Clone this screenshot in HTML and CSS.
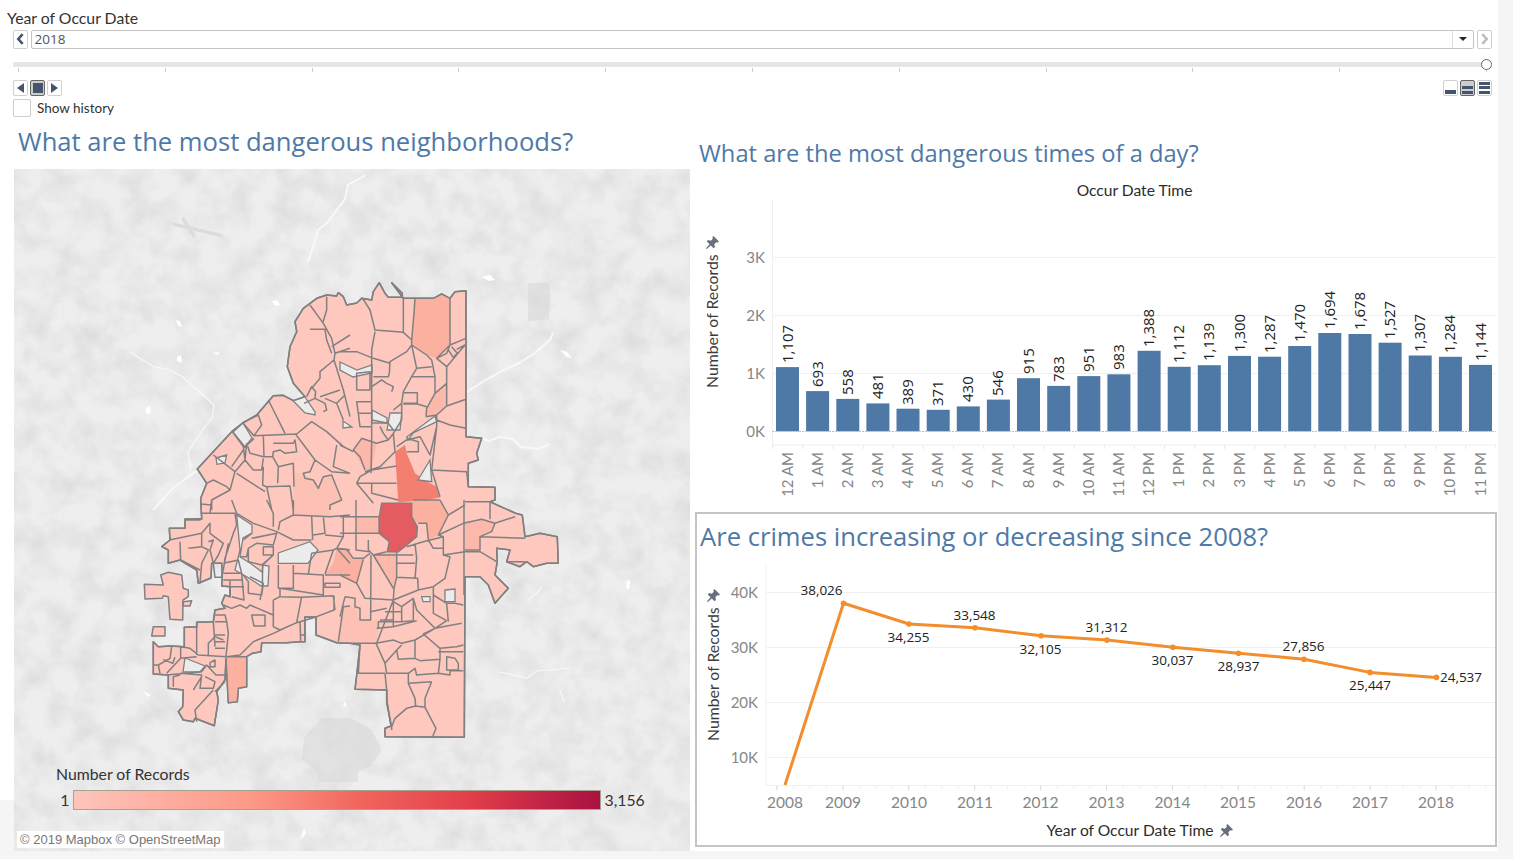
FILE: index.html
```html
<!DOCTYPE html>
<html lang="en">
<head>
	<meta charset="UTF-8">
	<title>Atlanta crime dashboard</title>
	<link rel="stylesheet" href="styles.css">
</head>
<body>
<div class="dash">
	<div class="filter">
		<div class="filter-label">Year of Occur Date</div>
		<div class="picker">
			<span class="btn"><svg viewBox="0 0 15 18" class="chev"><path d="M10 3.500 5 9l5 5.500" class="chev-on"/></svg></span>
			<div class="select">
				<span class="select-value">2018</span>
				<span class="select-arrow"><i class="caret"></i></span>
			</div>
			<span class="btn"><svg viewBox="0 0 15 18" class="chev"><path d="M5 3.500 10 9l-5 5.500" class="chev-off"/></svg></span>
		</div>
		<div class="slider">
			<div class="track"></div>
			<span class="knob"></span>
			<div class="ticks"><i></i><i></i><i></i><i></i><i></i><i></i><i></i><i></i><i></i><i></i><i></i></div>
		</div>
		<div class="controls">
			<div class="btn-group">
				<span class="btn small"><i class="tri-left"></i></span>
				<span class="btn small active"><i class="stop"></i></span>
				<span class="btn small"><i class="tri-right"></i></span>
			</div>
			<div class="btn-group">
				<span class="btn small view"><i></i></span>
				<span class="btn small view active"><i class="dim"></i><i></i><i></i></span>
				<span class="btn small view"><i></i><i></i><i></i></span>
			</div>
		</div>
		<label class="history"><span class="check"></span>Show history</label>
	</div>

	<div class="panels">
		<section class="left">
			<h2 class="title big">What are the most dangerous neighborhoods?</h2>
			<div class="map">
				<svg class="map-svg" width="676" height="682" viewBox="14 169 676 682">
					<defs>
						<filter id="mottle" x="0" y="0" width="100%" height="100%" color-interpolation-filters="sRGB">
							<feTurbulence type="fractalNoise" baseFrequency=".04" numOctaves="4" seed="7"/>
							<feColorMatrix values="0 0 0 0 .5  0 0 0 0 .5  0 0 0 0 .5  .28 0 0 0 -.1"/>
						</filter>
						<path id="outline" d="M197.300 469L231.700 431.700 243.300 422.700 256.700 415 273.300 395.700 283.300 395.300 293.300 400.700 305 396.700 293.300 383.300 287.300 366.700 290 346.700 296.700 331.700 295 321.700 303.300 308.300 316.700 298.300 326.700 295 336.700 296 338.300 292.700 343.300 296.700 346.700 305 356.700 303 361.700 298.300 371.700 300 373.300 291.700 379.300 282.700 385 293.300 388.300 297.300 402.300 297.300 402.300 293.300 391.700 282.700 403.300 298.300 433.300 298.300 441.700 294 450 298.300 455 291.700 466 290.700 466 436.700 481.700 438.300 476.700 453.300 478.300 460 468.300 463.300 468.300 486.700 495 487.300 495 500 490 501.700 515.700 513.300 522.300 515 525 536.700 540 533.300 557.300 536.700 558.300 563.300 546.700 563.300 533.300 566.700 526.700 561.700 520 566.700 506.700 561.700 510 550 496.700 548.300 497.300 561.700 495 575 508.300 588.300 495 603.300 488.300 585 480 576.700 465 576.700 464.300 737.300 385 736.700 385 728.300 391 726 386.700 700 386.700 690 355 689.300 356.700 675 360 645 350 643.300 336.700 642.700 316 635 316 617 305 617 305 641.700 300 641.700 286.700 642.700 261.700 642.700 261 651.700 252.300 653.300 246.700 656.700 246.700 686.700 238.300 688.300 237.300 701.700 228.300 702.700 226 658.300 225 680 216.700 691.700 218.300 700 214.300 725.700 195 718.300 193.300 721.700 183.300 720 178.300 711.700 182.700 706.700 183.300 690 168.300 688.300 168.300 675 153.300 674 153.300 641.700 158.300 646.700 170 646 184.300 646.700 184.300 627.300 196.700 626.700 196.700 622.300 213.300 621.700 215 610 225 608.300 221.700 603.300 225 595 230 596.700 230 586.700 221.700 586 222.300 578.300 221.700 563.300 211.700 563.300 211 578 198.300 583.300 196.700 570 180 560 168.300 563.300 168.300 550 161.700 546.700 170 540 169.300 528.300 185 528.300 185 519 201.700 519 200.700 500 200.700 498.300 206.700 483.300Z"/>
					</defs>
					<rect x="14" y="169" width="676" height="682" class="land"/>
					<rect x="14" y="169" width="676" height="682" filter="url(#mottle)"/>

					<!-- base map -->
					<path class="blob" d="M528 283h21l1 14-1 22-21 2zM304 738l18-20h28l22 12 9 20-10 16-13 6v10h-40l-2-12-14-10z"/>
					<path class="blob-soft" d="M172 222l50 12 2 4-50-12zM184 217l12 19-3 2-12-19z"/>
					<path class="road" d="M153 510l20-22 22-16 10-5M308 262l6-18 4-14 9-7 18-24 3-14 18-10M467 392l17-11 18-10 17-8 16-10 15-13 3-7M469 441l12-3 8 3 10-4 14 2 8 8 17 2 12-5"/>
					<path class="river" d="M130 352l24 15 13 2 14 7 19 16 14 13-2 13-11 14-13 20 3 18M500 672l27 6 10-7 33-3M528 600l10-8 4-6M560 690l4 12"/>
					<path class="speck" d="M176 320l4 1 2 6-4-1zM177 357l4-2 1 8-5-2zM272 301l5-1 3 5-5 1zM212 353l8-1-2 3zM146 408l4-2 1 7-5 1zM482 277l8-2 5 5-6 1zM560 350l7 2 5 6-5-1zM627 580l3 1-1 8-3-1zM148 697l-5-6 8 4zM345 701l2 6-4-1zM300 840l4-12 2 6z"/>

					<!-- city outline -->
					<use href="#outline" class="hood"/>
					<path class="hood" d="M144.300 584.300L163.300 585 160.700 575 168.300 572.300 181.700 575 183.300 588.300 188.300 590 188.300 596.700 183 600 182.700 620 170 619.300 168.300 596.700 163.300 595.700 162.300 598.300 145 599Z"/>
					<path class="hood" d="M183.300 601.700l8.400-1-1.700 5.300h-6.700zM153.300 626.700H165V636h-13.300z"/>

					<!-- slightly darker areas, zoom traced -->
					<g transform="translate(340 270) scale(.33333)">
						<path class="t3" d="M225 85h55l25-13 25 13v140l-40 40-30-10-45-30v-15l7-80z"/>
						<path class="t2" d="M320 340v68l-30 27-32 5 2-25 25-45zM65 505l45 15-15 80H75L40 545z"/>
						<path class="t4" d="M165 545l30-20 5 25 25 60 45 30 20 10 8 33-58 9-65 5z"/>
					</g>
					<g transform="translate(340 500) scale(.33333)">
						<path class="t3" d="M220 0h80l25 45-30 60-30 15-5-50h-28l-17-20V10zM0 150h20l20 25h30l-20 75-50-25z"/>
						<path class="t2" d="M375 70l50-12 40 12-10 25-35 15v45h-45zM50 50h68v50H50zM100 165l70-10v77l-8 33z"/>
						<path class="t1" d="M0 430v-75l15-35h30l15 40h55v25l-7 45z"/>
						<path class="t5" d="M125 10h90v40l17 30-2 30-30 25-25 20h-33l6-30-30-25V50z"/>
					</g>
					<g transform="translate(130 500) scale(.33333)">
						<path class="t3" d="M290 470h60v90l-25 5-3 40-27 3zM620 145l40 5v75l-75-3 25-32z"/>
						<path class="t1" d="M490 0h110v50l-110-5z"/>
					</g>
					<g transform="translate(130 270) scale(.33333)">
						<path class="t1" d="M495 610h25l5 15 25 5 15 25 15-35 25-5 30 75-35 15v15H490z"/>
					</g>
					<use href="#outline" class="outline-top"/>

					<!-- holes -->
					<g class="holes">
						<path d="M233 432l10-9 9 15-7 9zM216 458l10.700-3-1.700 8-8 1.300zM293.300 401l11.700-4 10 15v3l-10-2zM340 362l17 8 15-5v8l-19 4-13-7zM343 421l9 6-9 1zM372 410l15 8v5h-15zM390 413h11.700l-1.700 17h-13zM406.700 437L435 416l1.700 5.700L413 433l-5 7zM418 480l12-20 1.700 21.700zM445 590l10-1v12.700h-10zM421.700 596.700h8.300v5h-7zM278.300 553L310 541.700l8 8.300-10 13.300h-29.700zM236.700 515l15.300 10v8l-9 5-3 19 10 6 12 9 1-7 6 1-1 20h-7l-12-8-9-5-5-3 5-20zM185 658l20 8-5 6h-17z"/>
					</g>

					<!-- boundaries -->
					<g transform="translate(130 270) scale(.33333)">
						<path class="edge" d="M540 105l40 55 25 45 10 45-3 20 28 90 20 80M590 80v40l-12 40M540 178h45l5 32 15 40M605 230l55-35M615 250l45-15M612 270l-42 35v20l-25 30M530 380l15-30 12 15-2 20-33 15M570 380l60-20M555 385l30 15 5 20-10 5M585 385l35 15 25-25M620 400l20 50M415 390l50 100M338 458l47-23 10 30-23 32zM372 497l128-5 45-37 45 30 50 45M400 497l2 63h26M495 490l15 20 45 60 50 35 55 5M340 535l32-30M350 520l10 30 40 10M350 520l-5 50 25 30h25l5-35M430 520h60l5-10 5 35-35 5-15-10-20 5-2 15 17 30-2 50M307 485l33 45 5 40-30 35-65-50M305 590l35-50M315 605l-15 55M320 610l85 55M230 640l20-10 40 20 10 10-55 30v30M400 590l-2 55 10 5 72-2 10 72M445 590l45-10 2 70M555 570l-15 35-20 5 5 15 25 5 15 25 15-35 25-5 30 75-35 15v15M410 650l15 70M620 525l-10 65 50 20"/>
					</g>
					<g transform="translate(340 270) scale(.33333)">
						<path class="edge" d="M68 85l22 35 15 60 85 7V85M225 85l-3 45-7 80-25-23M330 85v140l-40 40M215 210v15l45 30 15 15 10 50v50l-25 45-2 25M215 225l15 70-15 25-25 45-5 35v50M215 225l-15 20-50 30-2 35-3 10h-45M150 280l-50-15-50-20H0M105 185l-10 55v280l-2 90M330 225l-10 25-30 15 30 25v118M330 225l48-20M350 238l25-13-55 65M325 240l15 22 12-12-17-20M230 295l45-5M215 320h68M190 368h42v32h-42M190 402h42l28 8M320 340l-35 30M320 408l58-20M258 440l32-5 30-27M290 450l40 15 48 10M290 435v35l-20 85-30-55-40 10M290 470l-15 130 105 5 5 45M275 600l25 80M200 505l35 10v30h-35M170 530l30-20M95 350l15-10 15-10 15 10 20 10-5 15M50 310l40-5v55H50zM95 395H50l5 35h40M55 430l5 40h35M95 450l50 10 15 20M185 400l-25 20M185 450l-25 40-15 20-35 10-45-15-25 35 20 20 15 40M120 470l10 20 15 20M160 490l5 55-45 45-45 15M0 525l40 20M60 620l35-20 75-12M60 620l-10 20 50 60M50 640h120M95 640v30l80 20"/>
					</g>
					<g transform="translate(130 500) scale(.33333)">
						<path class="edge" d="M212 40h103l5 35-10 25-25 75-5 35M245 0l-5 40M212 12l33 3M305 0l15 40 50 30 70 25 50 25h55M410 0l20 40v40M490 0v45l-40 20-5 25M490 45l110 5 60-5M545 50l3 70M580 50l5 50-35 5M585 105l55 5V50M640 110l-20 35 40 5M165 60h47M118 120l97-20 25-30v30l40 30-15 35-15 25 5 42h20l20-102M150 125l2 55 58 30M175 145l40-5 20 10-20 40-5 60M215 100v40M235 125l15-5-10 30 10 40M280 190l45-10 10 40h-55M280 240h55M300 240v50M335 220l7 80-37-10M300 260h42M340 225l15 20v35l40 5 5-35-40-20M365 115l75-15-10 35-50-5-25 15v40l40 10 35-30M400 140h30v25h-30zM340 120l25-20M330 170h20l5-25M430 165l-32 30-1 70-7 35M445 195v70h45v-70M490 220l90 5v60l-130-20v25l65 2 95-5 5 43M430 300l20-10M430 300v80l20 10 50-22 15-78M535 222l10-62 65-10-25 72M610 150l10-5 40 45M585 225h75M585 250h45v12h-45zM625 425l15-105 20-2M612 287v43l-52 20-60 18-70 32-60 25-40 40-40 5-85-5-25-20-28-5M200 370v95M250 365l5 75M255 365h35l5 35-7 70M255 345h30l5 20M255 405h30M255 425h30M235 465v-35l20-20 25 10M255 445h30M280 315l25 10 25-10 20 10 10-10 70 30M365 345h40v33h-33zM510 365l2 60M510 405h15M125 440l-5 35-35 20H70M152 440v35l-42 45M152 475l48-5M85 495l5 25M100 478l28 12 7-18M110 525l105-10 15-20 28 30h27M150 520l65 5-5 40h40l5-20-30-15M150 525l-20 5v30M215 530l-25 40M240 488l15-8v20h-15zM250 570l-55 60 5 35M255 575l30-30M290 470h60"/>
					</g>
					<g transform="translate(340 500) scale(.33333)">
						<path class="edge" d="M48 0v150l42 5M0 50h118M0 100h118M118 50v50M85 120v30l15 15M0 148h20l20 27h30l20-15M140 155l-40 10h70M100 165l60 100M70 178l-20 72M0 225l50 25 25 45 85 5 75-30 45-10 35-25 15-65-20-5v-55l-60 15-50 15M170 155v77l-8 33-2 35-50 130M235 270l-2-35-63-3M170 190h55M170 165h50M225 130l5 45-5 60M310 165l65-10h45l50 30M235 70h25l5 50M265 120l15 25h30M220 0h80l25 45-30 60 15 5M325 45l50-30M295 105l75-35 55-12 40 12 60-20M375 5h75v53M375 150h45v-40l35-15 10-25M420 110l135 5M500 185h55M15 290l30 5v25l15 5v35h32l1-195M15 290L0 350M92 335l48-10M160 305l25 15v45h-70v20l45-5zM120 360h40M135 335h50M185 320l35-25 10 35 55 55 80-15M220 295v67l-35 3M280 260v80l40 22M280 285l40 25h25l25 5M320 310l5 55M285 385l35-23M285 385l-35 17 50 43 50-5 20-5M110 385l50-5 70-18M285 385l-60 35-40 10-25-10-52 10M0 430h108l27 60 5 30h65M135 490l35-40 15-15M170 450l5 28 50-3 15 7 60-4-5 42-65 5-5-20-20 15v30l70-5M225 420v55M300 445v33M295 455h75M320 470l25 5 10 15v20h-35zM295 520l35 5v-13h40M135 520l5 50v40l15 70v10M205 550l20 45 2 23-27 7-35 30-10 25M275 545l-20 50v27l-28-4M255 622l33 63-10 25M60 435l-5 85h80"/>
						<path class="edge" d="M125 10h90v40l17 30-2 30-30 25-25 20h-33l6-30-30-25V50zM372 0v285"/>
					</g>
				</svg>
				<div class="legend">
					<div class="legend-title">Number of Records</div>
					<div class="legend-row">
						<span class="legend-min">1</span>
						<span class="legend-bar"></span>
						<span class="legend-max">3,156</span>
					</div>
				</div>
				<div class="attrib">© 2019 Mapbox © OpenStreetMap</div>
			</div>
		</section>

		<section class="right">
			<h2 class="title mid">What are the most dangerous times of a day?</h2>
			<svg class="chart" width="802" height="336" viewBox="695 176 802 336">
				<defs>
					<path id="pin" d="M7.500 0L13 5.500l-1.200 1.100-1.500-.4-2 2L9 11l-1.400 1.200-2.800-2.800L.8 13 0 12.200l3.600-4-2.800-2.800L2 4l2.800.7 2-2-.4-1.500z"/>
				</defs>
				<text x="1134.500" y="196" class="head">Occur Date Time</text>
				<line x1="772.500" y1="200" x2="772.500" y2="445" class="grid"/>
				<line x1="772" y1="257.500" x2="1496" y2="257.500" class="grid"/>
				<line x1="772" y1="315.500" x2="1496" y2="315.500" class="grid"/>
				<line x1="772" y1="373.500" x2="1496" y2="373.500" class="grid"/>
				<line x1="772" y1="445" x2="1496" y2="445" class="grid"/>
				<line x1="772.300" y1="447" x2="1496" y2="447" class="bar-ticks"/>

				<text x="765" y="263" class="axis end">3K</text>
				<text x="765" y="321" class="axis end">2K</text>
				<text x="765" y="379" class="axis end">1K</text>
				<text x="765" y="437" class="axis end">0K</text>
				<text transform="translate(718 388) rotate(-90)" class="axis-title">Number of Records</text>
				<use href="#pin" x="706" y="236" class="pin"/>

				<rect x="776" y="367.100" width="23" height="64.200" class="bar"/>
				<rect x="806.100" y="391.100" width="23" height="40.200" class="bar"/>
				<rect x="836.300" y="398.900" width="23" height="32.400" class="bar"/>
				<rect x="866.400" y="403.400" width="23" height="27.900" class="bar"/>
				<rect x="896.500" y="408.700" width="23" height="22.600" class="bar"/>
				<rect x="926.700" y="409.800" width="23" height="21.500" class="bar"/>
				<rect x="956.800" y="406.400" width="23" height="24.900" class="bar"/>
				<rect x="986.900" y="399.600" width="23" height="31.700" class="bar"/>
				<rect x="1017" y="378.200" width="23" height="53.100" class="bar"/>
				<rect x="1047.200" y="385.900" width="23" height="45.400" class="bar"/>
				<rect x="1077.300" y="376.100" width="23" height="55.200" class="bar"/>
				<rect x="1107.400" y="374.300" width="23" height="57" class="bar"/>
				<rect x="1137.600" y="350.800" width="23" height="80.500" class="bar"/>
				<rect x="1167.700" y="366.800" width="23" height="64.500" class="bar"/>
				<rect x="1197.800" y="365.200" width="23" height="66.100" class="bar"/>
				<rect x="1228" y="355.900" width="23" height="75.400" class="bar"/>
				<rect x="1258.100" y="356.700" width="23" height="74.600" class="bar"/>
				<rect x="1288.200" y="346" width="23" height="85.300" class="bar"/>
				<rect x="1318.300" y="333" width="23" height="98.300" class="bar"/>
				<rect x="1348.500" y="334" width="23" height="97.300" class="bar"/>
				<rect x="1378.600" y="342.700" width="23" height="88.600" class="bar"/>
				<rect x="1408.700" y="355.500" width="23" height="75.800" class="bar"/>
				<rect x="1438.900" y="356.800" width="23" height="74.500" class="bar"/>
				<rect x="1469" y="364.900" width="23" height="66.400" class="bar"/>
				<line x1="772" y1="431.500" x2="1496" y2="431.500" class="zero"/>

				<g transform="translate(-1.500 0)">
					<text transform="translate(794 363) rotate(-90)" class="val">1,107</text>
					<text transform="translate(824.100 387) rotate(-90)" class="val">693</text>
					<text transform="translate(854.300 395) rotate(-90)" class="val">558</text>
					<text transform="translate(884.400 399) rotate(-90)" class="val">481</text>
					<text transform="translate(914.500 405) rotate(-90)" class="val">389</text>
					<text transform="translate(944.700 406) rotate(-90)" class="val">371</text>
					<text transform="translate(974.800 402) rotate(-90)" class="val">430</text>
					<text transform="translate(1004.900 396) rotate(-90)" class="val">546</text>
					<text transform="translate(1035 374) rotate(-90)" class="val">915</text>
					<text transform="translate(1065.200 382) rotate(-90)" class="val">783</text>
					<text transform="translate(1095.300 372) rotate(-90)" class="val">951</text>
					<text transform="translate(1125.400 370) rotate(-90)" class="val">983</text>
					<text transform="translate(1155.600 347) rotate(-90)" class="val">1,388</text>
					<text transform="translate(1185.700 363) rotate(-90)" class="val">1,112</text>
					<text transform="translate(1215.800 361) rotate(-90)" class="val">1,139</text>
					<text transform="translate(1246 352) rotate(-90)" class="val">1,300</text>
					<text transform="translate(1276.100 353) rotate(-90)" class="val">1,287</text>
					<text transform="translate(1306.200 342) rotate(-90)" class="val">1,470</text>
					<text transform="translate(1336.300 329) rotate(-90)" class="val">1,694</text>
					<text transform="translate(1366.500 330) rotate(-90)" class="val">1,678</text>
					<text transform="translate(1396.600 339) rotate(-90)" class="val">1,527</text>
					<text transform="translate(1426.700 352) rotate(-90)" class="val">1,307</text>
					<text transform="translate(1456.900 353) rotate(-90)" class="val">1,284</text>
					<text transform="translate(1487 361) rotate(-90)" class="val">1,144</text>

					<text transform="translate(794 452) rotate(-90)" class="axis end">12 AM</text>
					<text transform="translate(824.100 452) rotate(-90)" class="axis end">1 AM</text>
					<text transform="translate(854.300 452) rotate(-90)" class="axis end">2 AM</text>
					<text transform="translate(884.400 452) rotate(-90)" class="axis end">3 AM</text>
					<text transform="translate(914.500 452) rotate(-90)" class="axis end">4 AM</text>
					<text transform="translate(944.700 452) rotate(-90)" class="axis end">5 AM</text>
					<text transform="translate(974.800 452) rotate(-90)" class="axis end">6 AM</text>
					<text transform="translate(1004.900 452) rotate(-90)" class="axis end">7 AM</text>
					<text transform="translate(1035 452) rotate(-90)" class="axis end">8 AM</text>
					<text transform="translate(1065.200 452) rotate(-90)" class="axis end">9 AM</text>
					<text transform="translate(1095.300 452) rotate(-90)" class="axis end">10 AM</text>
					<text transform="translate(1125.400 452) rotate(-90)" class="axis end">11 AM</text>
					<text transform="translate(1155.600 452) rotate(-90)" class="axis end">12 PM</text>
					<text transform="translate(1185.700 452) rotate(-90)" class="axis end">1 PM</text>
					<text transform="translate(1215.800 452) rotate(-90)" class="axis end">2 PM</text>
					<text transform="translate(1246 452) rotate(-90)" class="axis end">3 PM</text>
					<text transform="translate(1276.100 452) rotate(-90)" class="axis end">4 PM</text>
					<text transform="translate(1306.200 452) rotate(-90)" class="axis end">5 PM</text>
					<text transform="translate(1336.300 452) rotate(-90)" class="axis end">6 PM</text>
					<text transform="translate(1366.500 452) rotate(-90)" class="axis end">7 PM</text>
					<text transform="translate(1396.600 452) rotate(-90)" class="axis end">8 PM</text>
					<text transform="translate(1426.700 452) rotate(-90)" class="axis end">9 PM</text>
					<text transform="translate(1456.900 452) rotate(-90)" class="axis end">10 PM</text>
					<text transform="translate(1487 452) rotate(-90)" class="axis end">11 PM</text>
				</g>
			</svg>

			<div class="trend">
				<h2 class="title big trend-title">Are crimes increasing or decreasing since 2008?</h2>
				<svg class="chart" width="798" height="285" viewBox="697 560 798 285">
					<line x1="766" y1="564" x2="766" y2="785" class="grid"/>
					<line x1="766" y1="592.500" x2="1495" y2="592.500" class="grid"/>
					<line x1="766" y1="647.500" x2="1495" y2="647.500" class="grid"/>
					<line x1="766" y1="702.500" x2="1495" y2="702.500" class="grid"/>
					<line x1="766" y1="757.500" x2="1495" y2="757.500" class="grid"/>
					<line x1="766" y1="785.500" x2="1495" y2="785.500" class="grid"/>
					<line x1="776.500" y1="787" x2="1495" y2="787" class="minor-ticks"/>
					<line x1="776.500" y1="788" x2="1495" y2="788" class="major-ticks"/>

					<text x="758" y="598" class="axis end">40K</text>
					<text x="758" y="653" class="axis end">30K</text>
					<text x="758" y="708" class="axis end">20K</text>
					<text x="758" y="763" class="axis end">10K</text>
					<text transform="translate(719 741) rotate(-90)" class="axis-title">Number of Records</text>
					<use href="#pin" x="707" y="589" class="pin"/>

					<polyline class="trend-line" points="785,785 843.500,603.300 909,624 975,627.800 1041,635.800 1107,640.100 1173,647.200 1238.500,653.200 1304,659.200 1370,672.400 1436.500,677.400"/>
					<circle cx="843.500" cy="603.300" r="2.800" class="dot"/>
					<circle cx="909" cy="624" r="2.800" class="dot"/>
					<circle cx="975" cy="627.800" r="2.800" class="dot"/>
					<circle cx="1041" cy="635.800" r="2.800" class="dot"/>
					<circle cx="1107" cy="640.100" r="2.800" class="dot"/>
					<circle cx="1173" cy="647.200" r="2.800" class="dot"/>
					<circle cx="1238.500" cy="653.200" r="2.800" class="dot"/>
					<circle cx="1304" cy="659.200" r="2.800" class="dot"/>
					<circle cx="1370" cy="672.400" r="2.800" class="dot"/>
					<circle cx="1436.500" cy="677.400" r="2.800" class="dot"/>

					<text x="821.500" y="595" class="point">38,026</text>
					<text x="908.500" y="642" class="point">34,255</text>
					<text x="974.500" y="620" class="point">33,548</text>
					<text x="1040.500" y="654" class="point">32,105</text>
					<text x="1106.500" y="632" class="point">31,312</text>
					<text x="1172.500" y="665" class="point">30,037</text>
					<text x="1238.500" y="671" class="point">28,937</text>
					<text x="1303.500" y="651" class="point">27,856</text>
					<text x="1370" y="690" class="point">25,447</text>
					<text x="1461" y="682" class="point">24,537</text>

					<text x="785" y="807.500" class="year">2008</text>
					<text x="843" y="807.500" class="year">2009</text>
					<text x="909" y="807.500" class="year">2010</text>
					<text x="975" y="807.500" class="year">2011</text>
					<text x="1040.500" y="807.500" class="year">2012</text>
					<text x="1106.500" y="807.500" class="year">2013</text>
					<text x="1172.500" y="807.500" class="year">2014</text>
					<text x="1238" y="807.500" class="year">2015</text>
					<text x="1304" y="807.500" class="year">2016</text>
					<text x="1370" y="807.500" class="year">2017</text>
					<text x="1436" y="807.500" class="year">2018</text>
					<text x="1130" y="835.500" class="head">Year of Occur Date Time</text>
					<use href="#pin" x="1220" y="824" class="pin"/>
				</svg>
			</div>
		</section>
	</div>
</div>
</body>
</html>
```

FILE: styles.css
```css
*{
	margin:0;
	padding:0;
	box-sizing:border-box;
}
body{
	background:#f5f5f5;
	font-family:"Lato","Liberation Sans",sans-serif;
	overflow:hidden;
}
.dash{
	width:1498px;
	height:851px;
	background:linear-gradient(#f5f5f5,#f5f5f5) 0 800px/14px 51px no-repeat #fff;
}

/* filter strip */
.filter{
	height:125px;
	padding-top:10px;
}
.filter-label{
	height:20px;
	padding-left:7px;
	font-size:15.800px;
	line-height:15px;
	color:#333;
}
.picker{
	display:flex;
	gap:2.500px;
	margin-left:13px;
	width:1478.500px;
	height:18.500px;
}
.btn{
	display:flex;
	align-items:center;
	justify-content:center;
	width:15px;
	flex:none;
	border:1px solid #cfcfcf;
	border-radius:2px;
	background:#fff;
}
.chev{
	width:13px;
	height:16px;
}
.chev-on,.chev-off{
	fill:none;
	stroke-width:3;
}
.chev-on{
	stroke:#46556e;
}
.chev-off{
	stroke:#bdbdbd;
}
.select{
	flex:1;
	display:flex;
	justify-content:space-between;
	border:1px solid #c4c4c4;
	border-radius:2px;
}
.select-value{
	padding-left:3px;
	font:13.500px/16px "Open Sans",sans-serif;
	color:#555;
}
.select-arrow{
	display:flex;
	align-items:center;
	justify-content:center;
	width:21.500px;
	border-left:1px solid #ddd;
}
.caret{
	border-left:4px solid transparent;
	border-right:4px solid transparent;
	border-top:4px solid #222;
}
.slider{
	position:relative;
	margin:13.500px 0 0 13px;
	width:1474px;
}
.track{
	height:5px;
	background:#e6e6e6;
}
.knob{
	position:absolute;
	right:-4.500px;
	top:-3px;
	width:11px;
	height:11px;
	border:1px solid #666;
	border-radius:50%;
	background:#fff;
}
.ticks{
	display:flex;
	justify-content:space-between;
	margin-top:1px;
	padding:0 0 0 5px;
}
.ticks i{
	width:1px;
	height:4px;
	background:#ccc;
}
.controls{
	display:flex;
	justify-content:space-between;
	margin:8px 0 0 13px;
	width:1478.500px;
}
.btn-group{
	display:flex;
	gap:2px;
}
.btn.small{
	height:15.500px;
}
.btn.active{
	background:#cdcdcd;
	border-color:#666;
}
.tri-left,.tri-right{
	border-top:5px solid transparent;
	border-bottom:5px solid transparent;
}
.tri-left{
	border-right:7px solid #46556e;
}
.tri-right{
	border-left:7px solid #46556e;
}
.stop{
	width:10px;
	height:10px;
	background:#46556e;
}
.view{
	flex-direction:column;
	justify-content:flex-end;
	align-items:stretch;
	gap:1.500px;
	padding:1px;
}
.view i{
	height:3.500px;
	background:#46556e;
}
.view i.dim{
	background:#cdcdcd;
}
.history{
	display:flex;
	align-items:center;
	gap:6.500px;
	margin:3.500px 0 0 13px;
	font-size:13.500px;
	color:#333;
}
.check{
	width:17.500px;
	height:17.500px;
	border:1px solid #ccc;
	border-radius:2px;
}

/* panels */
.panels{
	display:grid;
	grid-template-columns:676px 802px;
	gap:5px;
	padding-left:14px;
}
.title{
	font-family:"Open Sans",sans-serif;
	font-weight:400;
	color:#4e79a7;
	white-space:nowrap;
}
.title.big{
	font-size:25.600px;
	line-height:32px;
}
.left .title{
	height:44px;
	padding:1px 0 0 4px;
}
.title.mid{
	height:51px;
	padding:12px 0 0 4px;
	font-size:23.700px;
	line-height:32px;
}
.map{
	position:relative;
	width:676px;
	height:682px;
}
.map-svg{
	display:block;
}
.land{
	fill:#eeeeee;
}
.blob{
	fill:#d6d6d6;
	opacity:.5;
}
.blob-soft{
	fill:#dcdcdc;
}
.road,.river{
	fill:none;
	stroke:#f8f8f8;
}
.road{
	stroke-width:2;
}
.river{
	stroke-width:1.200;
}
.speck{
	fill:#fff;
}
.hood{
	fill:#fec8be;
	stroke:#808080;
	stroke-width:1.500;
	stroke-linejoin:round;
}
.outline-top{
	fill:none;
	stroke:#808080;
	stroke-width:1.500;
	stroke-linejoin:round;
}
.t1{fill:#fdc0b4;}
.t2{fill:#fcb8aa;}
.t3{fill:#fbb0a0;}
.t4{fill:#f27f70;}
.t5{fill:#e45c62;}
.holes path{
	fill:#ececec;
	stroke:#808080;
	stroke-width:1.300;
}
.edge{
	fill:none;
	stroke:#808080;
	stroke-width:1.500;
	stroke-linejoin:round;
	vector-effect:non-scaling-stroke;
}
.legend{
	position:absolute;
	left:42px;
	top:596px;
	color:#333;
}
.legend-title{
	font-size:15.800px;
	line-height:18px;
}
.legend-row{
	display:flex;
	align-items:center;
	gap:3.500px;
	margin-top:6.500px;
	font-size:15.800px;
}
.legend-min{
	width:13.500px;
	text-align:right;
}
.legend-bar{
	width:528px;
	height:20px;
	border:1px solid #a5a294;
	background:linear-gradient(90deg,#fec5bb,#fc9684 35%,#f0645c 55%,#e23f4a 75%,#c02245 90%,#a81340);
}
.attrib{
	position:absolute;
	left:3px;
	top:661.500px;
	width:206.500px;
	height:17px;
	padding-left:3px;
	background:#fff;
	font:13px/18px "Liberation Sans",sans-serif;
	color:#777;
	white-space:nowrap;
}

/* charts */
.chart{
	display:block;
}
.head{
	font-size:15.600px;
	fill:#2b2b2b;
	text-anchor:middle;
}
.grid{
	stroke:#f0f0f0;
	stroke-width:1;
}
.zero{
	stroke:#c0c0c0;
	stroke-width:1;
	stroke-dasharray:2 1;
}
.bar-ticks{
	stroke:#e8e8e8;
	stroke-width:4;
	stroke-dasharray:1 29.130;
}
.minor-ticks{
	stroke:#ededed;
	stroke-width:3;
	stroke-dasharray:1 15.475;
}
.major-ticks{
	stroke:#dcdcdc;
	stroke-width:5;
	stroke-dasharray:1 64.900;
}
.axis{
	font-size:15px;
	fill:#868686;
}
.end{
	text-anchor:end;
}
.year{
	font-size:15.500px;
	fill:#868686;
	text-anchor:middle;
}
.axis-title{
	font-size:15.800px;
	fill:#3c3c3c;
}
.pin{
	fill:#66707e;
}
.bar{
	fill:#4e79a7;
}
.val{
	font-family:"Open Sans",sans-serif;
	font-size:15px;
	fill:#222;
}
.trend{
	height:335px;
	width:802px;
	border:2px solid #c4c4c4;
	background:#fff;
}
.trend-title{
	height:46px;
	padding:7px 0 0 3px;
}
.trend-line{
	fill:none;
	stroke:#f28e2b;
	stroke-width:3;
	stroke-linejoin:round;
}
.dot{
	fill:#f28e2b;
}
.point{
	font-family:"Open Sans",sans-serif;
	font-size:13.500px;
	fill:#222;
	text-anchor:middle;
}
```
